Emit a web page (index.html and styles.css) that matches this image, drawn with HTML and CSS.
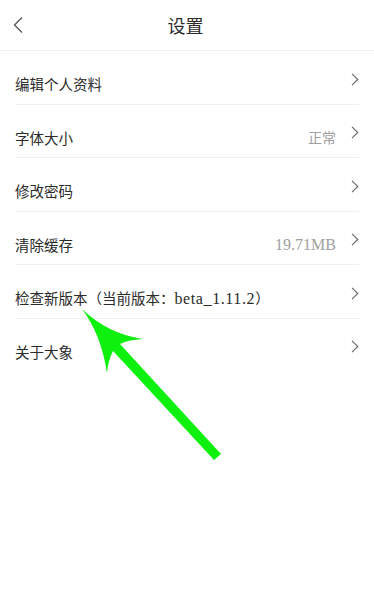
FILE: index.html
```html
<!DOCTYPE html>
<html lang="zh-CN">
<head>
<meta charset="utf-8">
<title>设置</title>
<link rel="stylesheet" href="styles.css">
</head>
<body>
<div class="page">
  <header class="header">
    <svg class="back" width="12" height="18" viewBox="0 0 12 18"><polyline points="9,1.5 1.5,9 9,16.5" fill="none" stroke="#555" stroke-width="1.3"/></svg>
    <h1 class="title">设置</h1>
  </header>
  <ul class="list">
    <li class="row"><span class="label">编辑个人资料</span><svg class="chev" width="8" height="13" viewBox="0 0 8 13"><polyline points="1,0.8 6.8,6.5 1,12.2" fill="none" stroke="#666" stroke-width="1.1"/></svg></li>
    <li class="row"><span class="label">字体大小</span><span class="value">正常</span><svg class="chev" width="8" height="13" viewBox="0 0 8 13"><polyline points="1,0.8 6.8,6.5 1,12.2" fill="none" stroke="#666" stroke-width="1.1"/></svg></li>
    <li class="row"><span class="label">修改密码</span><svg class="chev" width="8" height="13" viewBox="0 0 8 13"><polyline points="1,0.8 6.8,6.5 1,12.2" fill="none" stroke="#666" stroke-width="1.1"/></svg></li>
    <li class="row"><span class="label">清除缓存</span><span class="value latin">19.71MB</span><svg class="chev" width="8" height="13" viewBox="0 0 8 13"><polyline points="1,0.8 6.8,6.5 1,12.2" fill="none" stroke="#666" stroke-width="1.1"/></svg></li>
    <li class="row"><span class="label">检查新版本（当前版本：<span class="latin ver">beta_1.11.2</span>）</span><svg class="chev" width="8" height="13" viewBox="0 0 8 13"><polyline points="1,0.8 6.8,6.5 1,12.2" fill="none" stroke="#666" stroke-width="1.1"/></svg></li>
    <li class="row last"><span class="label">关于大象</span><svg class="chev" width="8" height="13" viewBox="0 0 8 13"><polyline points="1,0.8 6.8,6.5 1,12.2" fill="none" stroke="#666" stroke-width="1.1"/></svg></li>
  </ul>
  <svg class="annot" width="374" height="600" viewBox="0 0 374 600">
    <path d="M82,309 Q108,334 143,339 Q127,340 120,344 L221,454 L214,460 L113,351 Q108,361 107,373 Q101,334 82,309 Z" fill="#0ef00e"/>
  </svg>
</div>
</body>
</html>
```

FILE: styles.css
```css
html, body {
  margin: 0;
  padding: 0;
  background: #fff;
}
body {
  font-family: "Noto Sans CJK SC", "Noto Sans", sans-serif;
  color: #2b2b2b;
}
.page {
  position: relative;
  width: 374px;
  height: 600px;
  overflow: hidden;
}
.header {
  position: relative;
  height: 50px;
  border-bottom: 1px solid #f1f1f1;
  display: flex;
  align-items: center;
  justify-content: center;
}
.back {
  position: absolute;
  left: 13px;
  top: 16px;
}
.title {
  margin: 0;
  font-size: 18px;
  font-weight: 400;
  line-height: 50px;
  color: #2b2b2b;
  padding-right: 3px;
}
.list {
  list-style: none;
  margin: 0;
  padding: 0;
}
.row {
  display: flex;
  align-items: flex-start;
  box-sizing: border-box;
  height: 53.6px;
  margin: 0 15px;
  padding-top: 22px;
  border-bottom: 1px solid #efefef;
}
.row.last {
  border-bottom: none;
}
.label {
  flex: 1;
  font-size: 14.5px;
  line-height: 21px;
  color: #2b2b2b;
  white-space: nowrap;
}
.value {
  font-size: 14px;
  line-height: 21px;
  color: #a0a0a0;
  margin-right: 15px;
}
.latin {
  font-family: "Liberation Serif", "Noto Sans CJK SC", serif;
  font-size: 16px;
}
.ver {
  letter-spacing: 0.6px;
}
.value.latin {
  font-size: 16px;
}
.chev {
  flex: none;
  margin-top: -0.5px;
}
.annot {
  position: absolute;
  left: 0;
  top: 0;
  pointer-events: none;
}
```
